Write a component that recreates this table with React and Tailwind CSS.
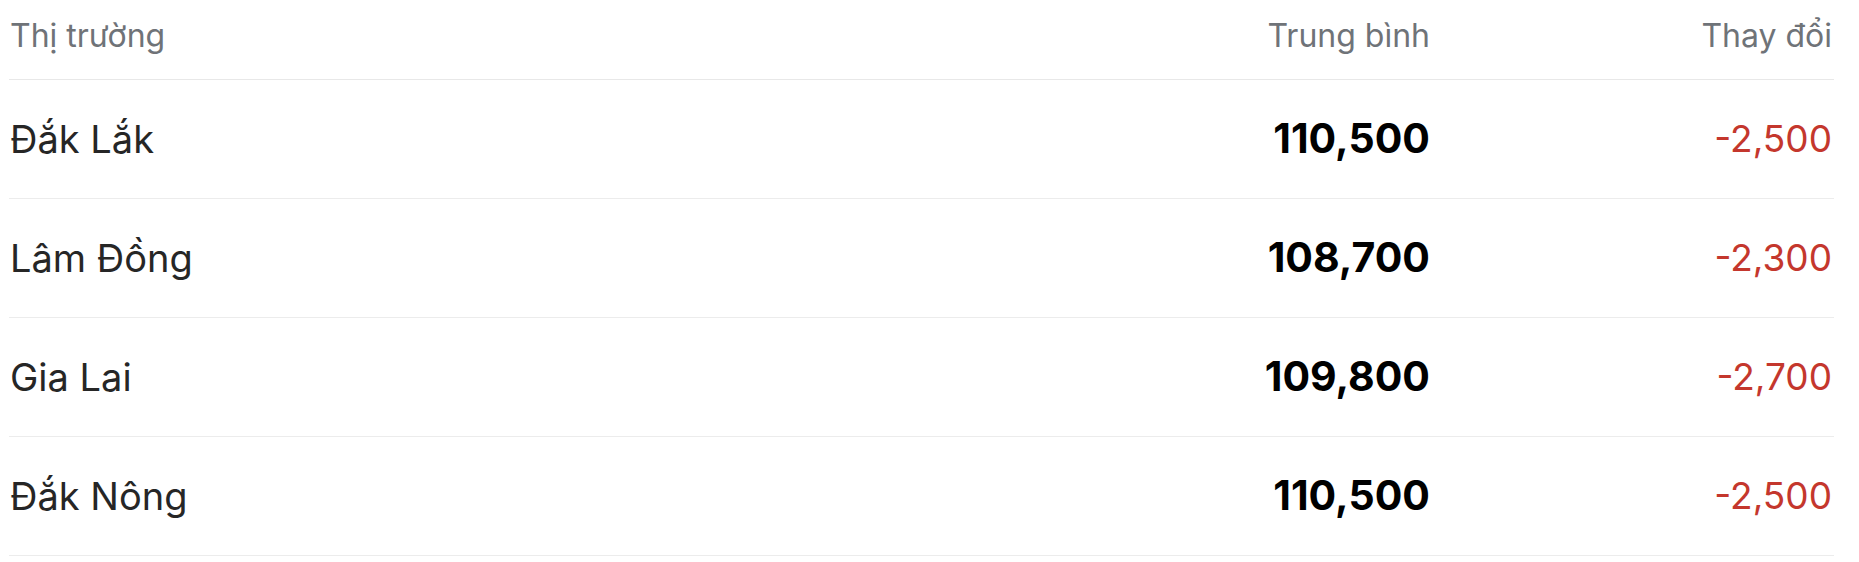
import React from "react";

const rows = [
  { name: "Đắk Lắk", avg: "110,500", change: "-2,500" },
  { name: "Lâm Đồng", avg: "108,700", change: "-2,300" },
  { name: "Gia Lai", avg: "109,800", change: "-2,700" },
  { name: "Đắk Nông", avg: "110,500", change: "-2,500" },
];

export default function App() {
  return (
    <div className="w-[1859px] h-[562px] bg-white" style={{ fontFamily: "Inter, 'Noto Sans', sans-serif" }}>
      <div className="ml-[9px] w-[1825px]">
        <div className="grid grid-cols-[1fr_400px_404px] h-[80px] border-b border-[#e8e8e8] items-center text-[32px] text-[#6f7378] pb-[8px]">
          <div className="pl-[1px]">Thị trường</div>
          <div className="text-right">Trung bình</div>
          <div className="text-right pr-[2px]">Thay đổi</div>
        </div>
        {rows.map((r, i) => (
          <div key={i} className="grid grid-cols-[1fr_400px_404px] h-[119px] border-b border-[#ececec] items-center">
            <div className="pl-[1px] text-[38px] text-[#262626]">{r.name}</div>
            <div className="text-right text-[41px] font-bold text-black">{r.avg}</div>
            <div className="text-right pr-[2px] text-[37px] text-[#c4372d]">{r.change}</div>
          </div>
        ))}
      </div>
    </div>
  );
}
